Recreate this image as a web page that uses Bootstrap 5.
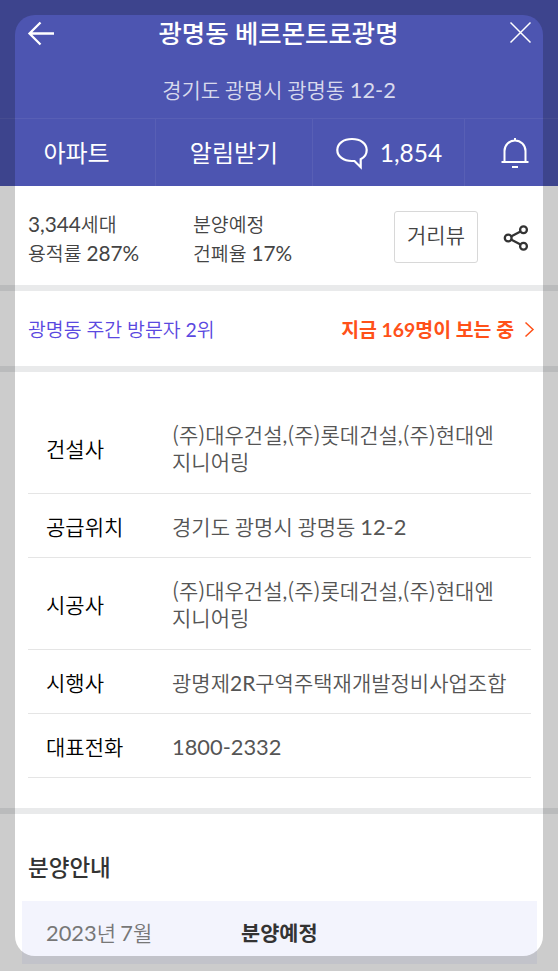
<!DOCTYPE html>
<html lang="ko">
<head>
<meta charset="utf-8">
<meta name="viewport" content="width=device-width, initial-scale=1">
<title>광명동 베르몬트로광명</title>
<link rel="stylesheet" href="https://cdn.jsdelivr.net/npm/bootstrap@5.3.0/dist/css/bootstrap.min.css">
<style>
body{font-family:Lato,"Noto Sans CJK KR DemiLight","Noto Sans CJK KR",sans-serif;color:#444;background:#fff;height:971px;overflow:hidden;font-size:19.4px;line-height:29px}
.top-area{background:#4d55b1;height:186px}
.title-row{height:66px;padding:0 26px 0 27px}
.title-row h1{font-family:Lato,"Noto Sans CJK KR",sans-serif;font-size:25.4px;font-weight:500;line-height:36px;padding-top:15px;padding-right:7px}
.address{height:52px;font-size:21px;line-height:48px;color:rgba(255,255,255,.8);word-spacing:-.8px}
.tabs-row{font-family:Lato,"Noto Sans CJK KR",sans-serif;height:68px;border-top:1px solid #585fb5;font-size:24px;grid-template-columns:156px 157px 152px 93px}
.tabs-row>*{border-right:1px solid #585fb5}
.tabs-row>:first-child{padding-right:2px}
.tabs-row>:last-child{border-right:0;padding-left:6px}
.visits{font-size:24.500px;padding-left:3px}
.summary{height:99px;padding:24px 29px 0 28px}
.summary-a{width:165px}
.num{font-size:1.04em;line-height:1}
.summary .num{font-size:1.07em}
.view-btn{width:84px;height:52px;margin-top:1px;border:1px solid #d8d8d8;border-radius:3px;font-size:21px;line-height:1;color:#444;padding:0 0 6px}
.share{margin:14px 0 0 25px}
.divider{height:6px;background:#e9eaeb}
.rank{height:75px;padding:2px 22px 0 28px}
.rank-name{color:#5a48e0}
.rank-live{color:#ff5119;font-weight:700;gap:10px}
.facts{margin:0 27px 0 28px;padding-top:30px;height:436px;font-size:21px;line-height:27px}
.fact{height:64px;border-bottom:1px solid #e5e5e5;padding:1px 0 0 18px}
.fact.tall{height:92px}
.fact dt{width:126px;font-weight:400;color:#000}
.fact dd{color:#555;word-spacing:-.6px}
.corp{font-family:"Noto Sans CJK KR DemiLight","Noto Sans CJK KR",sans-serif;line-height:1}
.notice h2{font-family:Lato,"Noto Sans CJK KR",sans-serif;font-size:22.5px;font-weight:500;line-height:30px;margin:39px 0 18px 28px;color:#333}
.schedule{margin:0 21px 0 22px;height:63px;background:#f3f4fd;padding-left:24px;font-size:21px;color:#777}
.schedule-date{width:195px;word-spacing:-1px}
.schedule strong{color:#333;font-weight:700;font-size:20.800px}
.rank-live,.schedule strong{font-family:Lato,"Noto Sans CJK KR",sans-serif}
.spotlight{position:absolute;left:15px;top:15px;width:528px;height:941px;border-radius:20px;box-shadow:0 0 0 40px rgba(0,0,0,.2);pointer-events:none}
</style>
</head>
<body class="position-relative">
<header class="top-area text-white">
  <div class="title-row d-flex justify-content-between">
    <svg class="mt-3 pt-1" width="28" height="31" viewBox="0 0 28 27" fill="none" stroke="#fff" stroke-width="2.300"><path d="M13.500 2.500 2.500 13.500l11 11M2.500 13.500h24.500"/></svg>
    <h1 class="mb-0">광명동 베르몬트로광명</h1>
    <svg style="margin-top:21px" width="23" height="23" viewBox="0 0 23 23" fill="none" stroke="#fff" stroke-width="1.500"><path d="m1.500 1.500 20 20m0-20-20 20"/></svg>
  </div>
  <div class="address text-center">경기도 광명시 광명동 <span class="num">12-2</span></div>
  <nav class="tabs-row d-grid">
    <div class="d-flex align-items-center justify-content-center"><span>아파트</span></div>
    <div class="d-flex align-items-center justify-content-center"><span>알림받기</span></div>
    <div class="d-flex align-items-center justify-content-center gap-2">
      <svg width="34" height="34" viewBox="0 0 34 34" fill="none" stroke="#fff" stroke-width="2.200"><path d="M17 3C8.500 3 2.300 7.500 2.300 14S8.500 25 17 25h2.500l6.200 6.200v-8c4-2 6-5.200 6-9.200C31.700 7.500 25.500 3 17 3Z"/></svg>
      <span class="visits">1,854</span>
    </div>
    <div class="d-flex align-items-center justify-content-center">
      <svg width="28" height="32" viewBox="0 0 28 32" fill="none" stroke="#fff" stroke-width="2"><path d="M3.500 25V14a10.500 10.500 0 0 1 21 0v11M.5 25h27M14 1v3M11 30h6"/></svg>
    </div>
  </nav>
</header>
<section class="summary d-flex">
  <div class="summary-a"><span class="num">3,344</span>세대<br>용적률 <span class="num">287%</span></div>
  <div>분양예정<br>건폐율 <span class="num">17%</span></div>
  <button class="view-btn btn ms-auto" type="button">거리뷰</button>
  <svg class="share" width="26" height="28" viewBox="0 0 26 28" fill="none" stroke="#333" stroke-width="2.300"><path d="m8 12.500 9.500-5M8 15.500l9.500 5"/><circle cx="5.200" cy="14" r="3.400"/><circle cx="20.500" cy="5.700" r="3.400"/><circle cx="20.500" cy="22.300" r="3.400"/></svg>
</section>
<div class="divider"></div>
<section class="rank d-flex justify-content-between align-items-center">
  <span class="rank-name">광명동 주간 방문자 2위</span>
  <span class="rank-live d-flex align-items-center">지금 169명이 보는 중
    <svg width="12" height="17" viewBox="0 0 12 17" fill="none" stroke="#ff5119" stroke-width="1.500"><path d="m1.500 1.500 7.500 7-7.500 7"/></svg>
  </span>
</section>
<div class="divider"></div>
<dl class="facts mb-0">
  <div class="fact tall d-flex align-items-center"><dt>건설사</dt><dd class="m-0"><span class="corp">(주)</span>대우건설,<span class="corp">(주)</span>롯데건설,<span class="corp">(주)</span>현대엔<br>지니어링</dd></div>
  <div class="fact d-flex align-items-center"><dt>공급위치</dt><dd class="m-0">경기도 광명시 광명동 <span class="num">12-2</span></dd></div>
  <div class="fact tall d-flex align-items-center"><dt>시공사</dt><dd class="m-0"><span class="corp">(주)</span>대우건설,<span class="corp">(주)</span>롯데건설,<span class="corp">(주)</span>현대엔<br>지니어링</dd></div>
  <div class="fact d-flex align-items-center"><dt>시행사</dt><dd class="m-0">광명제2R구역주택재개발정비사업조합</dd></div>
  <div class="fact d-flex align-items-center"><dt>대표전화</dt><dd class="m-0"><span class="num">1800-2332</span></dd></div>
</dl>
<div class="divider"></div>
<section class="notice">
  <h2>분양안내</h2>
  <div class="schedule d-flex align-items-center"><span class="schedule-date"><span class="num">2023</span>년 <span class="num">7</span>월</span><strong>분양예정</strong></div>
</section>
<div class="spotlight"></div>
<script src="https://cdn.jsdelivr.net/npm/bootstrap@5.3.0/dist/js/bootstrap.bundle.min.js"></script>
</body>
</html>
